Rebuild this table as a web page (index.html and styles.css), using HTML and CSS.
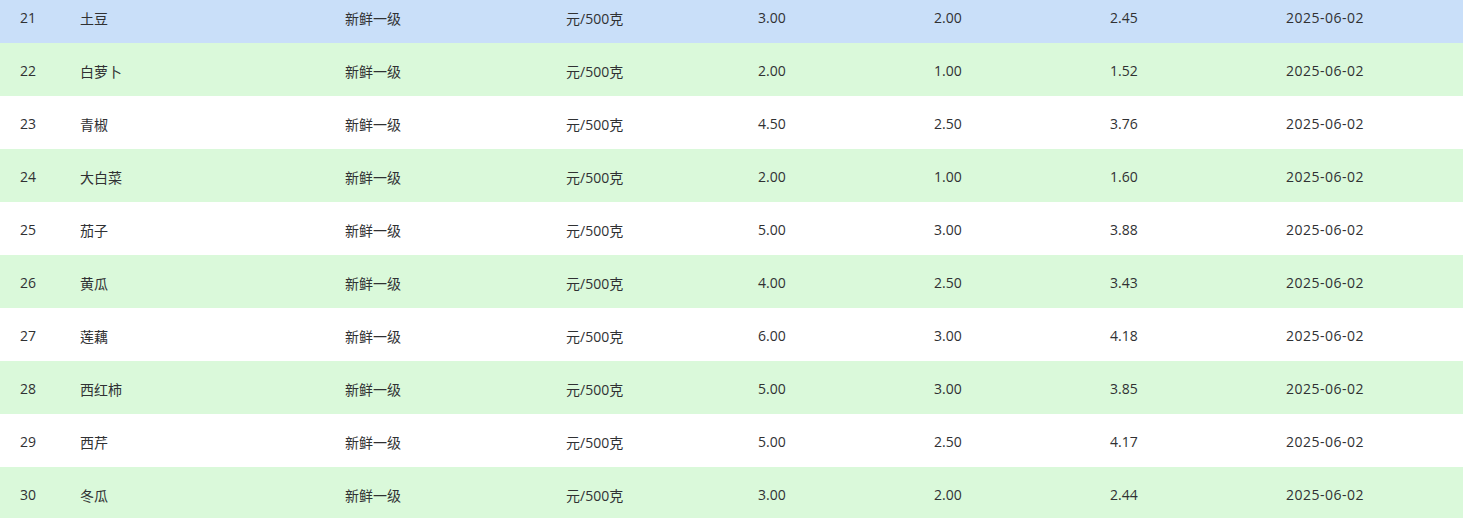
FILE: index.html
```html
<!DOCTYPE html>
<html lang="zh-CN">
<head>
<meta charset="utf-8">
<title>蔬菜价格</title>
<link rel="stylesheet" href="styles.css">
</head>
<body>
<div class="viewport">
<table class="price-table">
<colgroup>
<col class="c-id"><col class="c-name"><col class="c-grade"><col class="c-unit"><col class="c-num"><col class="c-num"><col class="c-num"><col class="c-date">
</colgroup>
<tbody>
<tr class="row current"><td class="first">21</td><td>土豆</td><td>新鲜一级</td><td>元/500克</td><td>3.00</td><td>2.00</td><td>2.45</td><td class="date">2025-06-02</td></tr>
<tr class="row stripe"><td class="first">22</td><td>白萝卜</td><td>新鲜一级</td><td>元/500克</td><td>2.00</td><td>1.00</td><td>1.52</td><td class="date">2025-06-02</td></tr>
<tr class="row"><td class="first">23</td><td>青椒</td><td>新鲜一级</td><td>元/500克</td><td>4.50</td><td>2.50</td><td>3.76</td><td class="date">2025-06-02</td></tr>
<tr class="row stripe"><td class="first">24</td><td>大白菜</td><td>新鲜一级</td><td>元/500克</td><td>2.00</td><td>1.00</td><td>1.60</td><td class="date">2025-06-02</td></tr>
<tr class="row"><td class="first">25</td><td>茄子</td><td>新鲜一级</td><td>元/500克</td><td>5.00</td><td>3.00</td><td>3.88</td><td class="date">2025-06-02</td></tr>
<tr class="row stripe"><td class="first">26</td><td>黄瓜</td><td>新鲜一级</td><td>元/500克</td><td>4.00</td><td>2.50</td><td>3.43</td><td class="date">2025-06-02</td></tr>
<tr class="row"><td class="first">27</td><td>莲藕</td><td>新鲜一级</td><td>元/500克</td><td>6.00</td><td>3.00</td><td>4.18</td><td class="date">2025-06-02</td></tr>
<tr class="row stripe"><td class="first">28</td><td>西红柿</td><td>新鲜一级</td><td>元/500克</td><td>5.00</td><td>3.00</td><td>3.85</td><td class="date">2025-06-02</td></tr>
<tr class="row"><td class="first">29</td><td>西芹</td><td>新鲜一级</td><td>元/500克</td><td>5.00</td><td>2.50</td><td>4.17</td><td class="date">2025-06-02</td></tr>
<tr class="row stripe"><td class="first">30</td><td>冬瓜</td><td>新鲜一级</td><td>元/500克</td><td>3.00</td><td>2.00</td><td>2.44</td><td class="date">2025-06-02</td></tr>
</tbody>
</table>
</div>
</body>
</html>
```

FILE: styles.css
```css
html, body {
  margin: 0;
  padding: 0;
  background: #ffffff;
  overflow: hidden;
}
.viewport {
  height: 518px;
  overflow: hidden;
}
.price-table {
  margin-top: -10px;
  width: 100%;
  border-collapse: collapse;
  table-layout: fixed;
  font-family: "Open Sans", "Noto Sans CJK SC", sans-serif;
  font-size: 14px;
  color: #303133;
}
.c-id { width: 70px; }
.c-name { width: 265px; }
.c-grade { width: 221px; }
.c-unit { width: 192px; }
.c-num { width: 176px; }
.c-date { width: auto; }
.row td {
  height: 53px;
  padding: 2px 0 0 10px;
  vertical-align: middle;
  text-align: left;
  white-space: nowrap;
  box-sizing: border-box;
}
.row td.first {
  padding-left: 20px;
}
.row td.date {
  letter-spacing: 0.5px;
}
.row.stripe {
  background: #daf9da;
}
.row.current {
  background: #c9dff9;
}
```
